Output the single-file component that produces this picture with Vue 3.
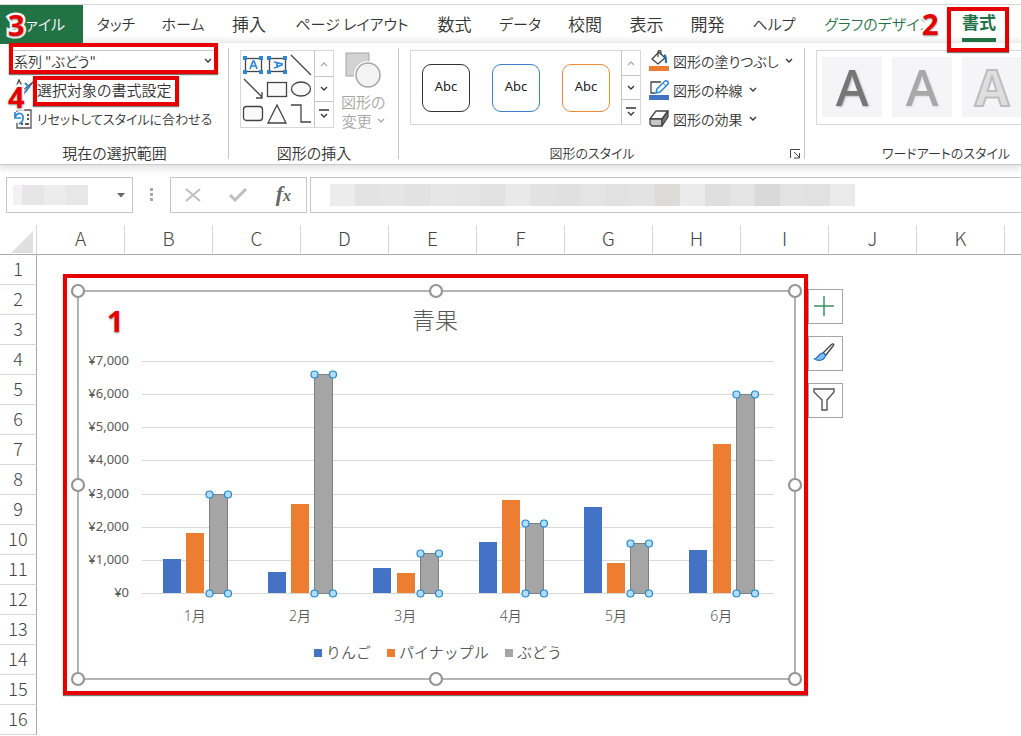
<script setup>
const tabs = [
  { name: 'タッチ', kana: true },
  { name: 'ホーム', kana: true },
  { name: '挿入' },
  { name: 'ページ レイアウト', kana: true },
  { name: '数式' },
  { name: 'データ', kana: true },
  { name: '校閲' },
  { name: '表示' },
  { name: '開発' },
  { name: 'ヘルプ', kana: true }
]
const presets = ['dark', 'blue', 'orange']
const wordArts = ['solid', 'soft', 'outline']
const columns = ['A', 'B', 'C', 'D', 'E', 'F', 'G', 'H', 'I', 'J', 'K', '']
const rowCount = 16

const plot = { left: 72, top: 78, width: 632, height: 232, max: 7000 }
const months = ['1月', '2月', '3月', '4月', '5月', '6月']
const series = [
  { name: 'りんご', color: '#4472c4', values: [1030, 630, 750, 1540, 2600, 1300], legendX: 244 },
  { name: 'パイナップル', color: '#ed7d31', values: [1800, 2700, 600, 2800, 900, 4500], legendX: 317 },
  { name: 'ぶどう', color: '#a5a5a5', values: [3000, 6600, 1200, 2100, 1500, 6000], legendX: 435 }
]
const ticks = [7000, 6000, 5000, 4000, 3000, 2000, 1000, 0]
const bottom = plot.top + plot.height
const step = plot.width / months.length
const yOf = (v) => Math.round(bottom - (v / plot.max) * plot.height)
const xOf = (m, s) => Math.floor(plot.left + m * step + 21.05 + s * 23.3)
const yen = (v) => '¥' + v.toLocaleString('en-US')
const selected = series[2].values.map((v, m) => ({ x: xOf(m, 2), y: yOf(v) }))
const frameHandles = [[8, 8], [366, 8], [725, 8], [8, 202], [725, 202], [8, 396], [366, 396], [725, 396]]

const mosaic = ['#ececec', '#e3e3e3', '#e5e5e5', '#e2e2e2', '#e6e6e6', '#e4e4e4', '#e1e1e1', '#e9e9e9', '#e2e2e2', '#e0e0e0', '#e4e4e4', '#e1e1e1', '#e3e3e3', '#dddbd8', '#ebebeb', '#dfdfdf', '#e4e4e4', '#d9d9d9', '#e3e3e3', '#e1e1e1', '#eaeaea']
</script>

<template>
  <div class="app">
    <nav class="tabs">
      <button class="tab file">ファイル</button>
      <button v-for="t in tabs" :key="t.name" class="tab" :class="{ kana: t.kana }">{{ t.name }}</button>
      <button class="tab kana design">グラフのデザイン</button>
      <button class="tab current"><span>書式</span></button>
    </nav>

    <section class="ribbon">
      <div class="group selection">
        <div class="body stack">
          <label class="combo">
            <select aria-label="グラフ要素">
              <option>系列 "ぶどう"</option>
            </select>
            <svg class="chev" width="8" height="6" viewBox="0 0 8 6"><path d="M1 1l3 3 3-3" /></svg>
          </label>
          <button class="cmd large">
            <svg width="24" height="22" viewBox="0 0 24 22" fill="none"><path d="M3 13L8 1l4 8" stroke="#555" stroke-width="1.5" /><path d="M22 3l-9 11-3 2 1-4z" stroke="#555" stroke-width="1.3" /><path d="M14 4l4 4-7 9" stroke="#2b88d8" stroke-width="2" /></svg>
            選択対象の書式設定
          </button>
          <button class="cmd small">
            <svg width="24" height="22" viewBox="0 0 24 22" fill="none"><path d="M6 4V2h14v18H6v-5" fill="#fafafa" stroke="#555" stroke-width="1.3" /><path d="M10 16h2m2 0h4M16 11h2M16 7h2" stroke="#555" stroke-width="2" /><path d="M4 4v6h6M4 10c2-7 9-5 8 0 0 3-2 5-4 6" stroke="#2b88d8" stroke-width="1.7" /></svg>
            リセットしてスタイルに合わせる
          </button>
        </div>
        <h2>現在の選択範囲</h2>
      </div>

      <div class="group insert">
        <div class="body">
          <div class="gallery">
            <svg width="73" height="75" viewBox="0 0 73 75" fill="none" stroke="#444" stroke-width="1.3">
              <g><rect x="4.500" y="7.500" width="16" height="13" /><path d="M9 18l3-8h1l3 8M10 15h5" stroke="#2b88d8" stroke-width="1.700" /></g>
              <g><rect x="28.500" y="7.500" width="16" height="13" /><path d="M33 11l8 2v1l-8 3M36 11v6" stroke="#2b88d8" stroke-width="1.700" /></g>
              <g fill="#2b88d8" stroke="none"><path d="M2 5h4v4H2zM18 5h4v4h-4zM2 19h4v4H2zM18 19h4v4h-4zM26 5h4v4h-4zM42 5h4v4h-4zM26 19h4v4h-4zM42 19h4v4h-4z" /></g>
              <path d="M50 4l20 20M3 28l18 18M21 41v6h-6" />
              <rect x="26.500" y="31.500" width="19" height="14" fill="#fafafa" />
              <ellipse cx="60" cy="38" rx="9.500" ry="7" fill="#fafafa" />
              <rect x="2.500" y="55.500" width="19" height="14" rx="3" fill="#fafafa" />
              <path d="M36 54l9 18H27z" fill="#fafafa" />
              <path d="M50 54h10v17h10" />
            </svg>
            <div class="scroll">
              <button aria-label="上へ" class="off"><svg class="chev" width="8" height="6" viewBox="0 0 8 6"><path d="M1 5l3-3 3 3" /></svg></button>
              <button aria-label="下へ"><svg class="chev" width="8" height="6" viewBox="0 0 8 6"><path d="M1 1l3 3 3-3" /></svg></button>
              <button aria-label="その他"><svg class="chev" width="10" height="10" viewBox="0 0 10 10"><path d="M0 1h10M2 5l3 3 3-3" /></svg></button>
            </div>
          </div>
          <button class="change" disabled>
            <svg width="38" height="40" viewBox="0 0 38 40"><rect x="2" y="3" width="23" height="23" fill="#d2d2d2" stroke="#a6a6a6" /><circle cx="24" cy="25" r="14" fill="#fff" /><circle cx="24" cy="25" r="12" fill="#f3f3f3" stroke="#a6a6a6" stroke-width="1.500" /></svg>
            <span>図形の</span>
            <span>変更 <svg class="chev" width="8" height="6" viewBox="0 0 8 6"><path d="M1 1l3 3 3-3" /></svg></span>
          </button>
        </div>
        <h2>図形の挿入</h2>
      </div>

      <div class="group styles">
        <div class="body">
          <div class="gallery wide">
            <div class="cards">
              <button v-for="p in presets" :key="p" class="card" :class="p">Abc</button>
            </div>
            <div class="scroll">
              <button aria-label="上へ" class="off"><svg class="chev" width="8" height="6" viewBox="0 0 8 6"><path d="M1 5l3-3 3 3" /></svg></button>
              <button aria-label="下へ"><svg class="chev" width="8" height="6" viewBox="0 0 8 6"><path d="M1 1l3 3 3-3" /></svg></button>
              <button aria-label="その他"><svg class="chev" width="10" height="10" viewBox="0 0 10 10"><path d="M0 1h10M2 5l3 3 3-3" /></svg></button>
            </div>
          </div>
          <div class="stack">
            <button class="cmd">
              <svg width="20" height="22" viewBox="0 0 20 22" fill="none"><rect y="16" width="20" height="5" fill="#ed7d31" /><path d="M3 9l7-7 6 6-7 6z" fill="#fafafa" stroke="#444" stroke-width="1.300" /><path d="M9 7V2c0-2 3-2 3 0v3" stroke="#444" stroke-width="1.200" /><path d="M15 5c2 1 2 3 2 8" stroke="#1e6fc0" stroke-width="2" /></svg>
              図形の塗りつぶし
              <svg class="chev" width="8" height="6" viewBox="0 0 8 6"><path d="M1 1l3 3 3-3" /></svg>
            </button>
            <button class="cmd">
              <svg width="20" height="22" viewBox="0 0 20 22" fill="none"><rect y="16" width="20" height="5" fill="#4472c4" /><path d="M12 3H2v11h4" stroke="#444" stroke-width="1.300" /><path d="M7 14l1-4 8-8c2-1 4 1 3 3l-8 8z" fill="#fff" stroke="#2b88d8" stroke-width="1.500" /><path d="M14 4l3 3" stroke="#2b88d8" /></svg>
              図形の枠線
              <svg class="chev" width="8" height="6" viewBox="0 0 8 6"><path d="M1 1l3 3 3-3" /></svg>
            </button>
            <button class="cmd">
              <svg width="20" height="22" viewBox="0 0 20 22" stroke="#444" stroke-width="1.300" stroke-linejoin="round"><path d="M1 11L7 3h12l-6 8z" fill="#fff" /><path d="M1 11h12v7H3l-2-2z" fill="#c8c8c8" /><path d="M13 11l6-8v6l-6 9z" fill="#777" /></svg>
              図形の効果
              <svg class="chev" width="8" height="6" viewBox="0 0 8 6"><path d="M1 1l3 3 3-3" /></svg>
            </button>
          </div>
        </div>
        <h2 class="kana">図形のスタイル</h2>
        <button class="launcher" aria-label="図形の書式設定"><svg width="11" height="10" viewBox="0 0 11 10" fill="none" stroke="#444"><path d="M.5 9V.5H10M4 3l5 5M9.500 4v5H4" /></svg></button>
      </div>

      <div class="group wordart">
        <div class="body">
          <div class="tiles">
            <button v-for="w in wordArts" :key="w" :class="w">A</button>
          </div>
        </div>
        <h2 class="kana">ワードアートのスタイル</h2>
      </div>
    </section>

    <section class="formula">
      <div class="namebox">
        <i class="blur"></i>
        <svg width="8" height="5" viewBox="0 0 8 5"><path d="M0 0h8L4 4.500z" fill="#666" /></svg>
      </div>
      <svg class="dots" width="4" height="14" viewBox="0 0 4 14"><path d="M0 0h3v3H0zM0 5h3v3H0zM0 10h3v3H0z" fill="#aaa" /></svg>
      <div class="actions">
        <button aria-label="キャンセル"><svg width="16" height="14" viewBox="0 0 16 14"><path d="M1 1l14 12M15 1L1 13" stroke="#bfbfbf" stroke-width="2" /></svg></button>
        <button aria-label="入力"><svg width="18" height="14" viewBox="0 0 18 14"><path d="M1 7l5 5L17 1" fill="none" stroke="#bfbfbf" stroke-width="3" /></svg></button>
        <button aria-label="関数の挿入" class="fx">f<small>x</small></button>
      </div>
      <div class="bar"><i v-for="(c, i) in mosaic" :key="i" :style="{ background: c }"></i></div>
    </section>

    <main class="sheet">
      <table>
        <thead>
          <tr>
            <th class="corner"><svg width="22" height="22" viewBox="0 0 22 22"><path d="M22 0v22H0z" fill="#dfdfdf" /></svg></th>
            <th v-for="(c, i) in columns" :key="i">{{ c }}</th>
          </tr>
        </thead>
        <tbody>
          <tr v-for="r in rowCount" :key="r">
            <th>{{ r }}</th>
            <td colspan="12"></td>
          </tr>
        </tbody>
      </table>

      <svg class="chart" width="733" height="404" viewBox="0 0 733 404">
        <rect x="8" y="8" width="717" height="388" fill="#fff" stroke="#a0a0a0" stroke-width="1.600" />
        <text class="title" x="365" y="46">青果</text>
        <g v-for="t in ticks" :key="t">
          <line :x1="plot.left" :x2="plot.left + plot.width" :y1="yOf(t) + 0.5" :y2="yOf(t) + 0.5" stroke="#d9d9d9" />
          <text class="tick" x="59" :y="yOf(t) + 4">{{ yen(t) }}</text>
        </g>
        <g v-for="(s, si) in series" :key="s.name" :fill="s.color">
          <rect v-for="(v, m) in s.values" :key="m" :x="xOf(m, si)" :y="yOf(v)" width="18" :height="bottom - yOf(v)" />
          <rect :x="s.legendX" y="366" width="8" height="8" />
          <text class="legend" :x="s.legendX + 12" y="375">{{ s.name }}</text>
        </g>
        <text v-for="(m, i) in months" :key="m" class="month" :x="plot.left + (i + 0.5) * step" y="338">{{ m }}</text>
        <g v-for="b in selected" :key="b.x">
          <rect :x="b.x + 0.5" :y="b.y + 0.5" width="18" :height="bottom - b.y" fill="none" stroke="#7f7f7f" />
          <g fill="#b4dcf8" stroke="#1e8ad6" stroke-width="1.2">
            <circle :cx="b.x + 0.5" :cy="b.y + 0.5" r="3.5" /><circle :cx="b.x + 19" :cy="b.y + 0.5" r="3.5" />
            <circle :cx="b.x + 0.5" :cy="bottom + 0.5" r="3.5" /><circle :cx="b.x + 19" :cy="bottom + 0.5" r="3.5" />
          </g>
        </g>
        <circle v-for="(h, i) in frameHandles" :key="'h' + i" :cx="h[0]" :cy="h[1]" r="6" fill="#fff" stroke="#959595" stroke-width="2.200" />
      </svg>

      <div class="tools">
        <button aria-label="グラフ要素"><svg width="22" height="22" viewBox="0 0 22 22"><path d="M11 1v20M1 11h20" stroke="#3a9160" stroke-width="1.500" /></svg></button>
        <button aria-label="グラフ スタイル"><svg width="22" height="22" viewBox="0 0 22 22" fill="none"><path d="M10 11l8-8c2-2 4-1 2 1l-7 9z" fill="#fff" stroke="#444" stroke-width="1.300" /><path d="M1 17c4 0 4-5 8-6 3 0 4 2 3 4-2 4-7 4-11 2z" fill="#83bdec" stroke="#1e6fc0" stroke-width="1.200" /></svg></button>
        <button aria-label="グラフ フィルター"><svg width="22" height="24" viewBox="0 0 22 24"><path d="M1 1h20v3l-7 8v10H9V12L1 4z" fill="#fafafa" stroke="#555" stroke-width="1.400" /></svg></button>
      </div>
    </main>

    <div class="mark m-chart"></div>
    <div class="mark m-combo"></div>
    <div class="mark m-format"></div>
    <div class="mark m-tab"></div>
    <b class="num n1">1</b>
    <b class="num n2">2</b>
    <b class="num n3">3</b>
    <b class="num n4">4</b>
  </div>
</template>

<style>
body { background: #fff; overflow: hidden; }
</style>

<style scoped>
* { box-sizing: border-box; }
.app {
  position: relative;
  overflow: hidden;
  padding-top: 4px;
  color: #333;
  font-family: "Noto Sans CJK JP", sans-serif;
  font-size: 15px;
  font-weight: 350;
  font-feature-settings: "palt";
}
button { margin: 0; padding: 0; border: 0; background: none; color: inherit; font: inherit; font-feature-settings: inherit; white-space: nowrap; }
svg { flex: none; display: block; }
.chev { fill: none; stroke: currentColor; stroke-width: 1.3; }

.tabs {
  display: grid;
  grid-template-columns: 83fr 66fr 68fr 64fr 142fr 63fr 68fr 62fr 61fr 61fr 72fr 137fr 64fr 10fr;
  height: 39px;
  border-top: 1px solid #d8d8d8;
}
.tab { min-width: 0; font-size: 17px; line-height: 34px; padding-bottom: 2px; }
.tab.kana { font-size: 15px; }
.tab.file { background: #217346; color: #fff; text-align: right; padding-right: 18px; font-size: 15px; }
.design { color: #217346; }
.current { color: #217346; font-weight: 700; }
.current span { display: inline-block; line-height: 32px; border-bottom: 4px solid #217346; }

.ribbon { display: flex; height: 122px; border-bottom: 1px solid #c8c8c8; box-shadow: 0 1px 8px 2px #ddd; }
.group { position: relative; display: flex; flex-direction: column; flex: none; padding-top: 4px; }
.group::after { content: ""; position: absolute; right: 0; top: 5px; bottom: 5px; border-right: 1px solid #c6c6c6; }
.selection { width: 229px; }
.insert { width: 170px; }
.styles { width: 406px; }
.wordart { width: 282px; }
.body { display: flex; flex: 1; padding: 3px 0 0 11px; }
.group h2 { margin: 0; height: 22px; font-size: 15px; line-height: 22px; font-weight: inherit; text-align: center; }
.group h2.kana { font-size: 13px; }
.styles h2 { padding-right: 20px; }
.stack { display: flex; flex-direction: column; gap: 5px; }
.stack .cmd { display: flex; align-items: center; gap: 4px; height: 24px; padding-bottom: 2px; line-height: 22px; font-size: 14px; }
.stack .cmd .chev { margin-left: 2px; }
.selection .cmd { gap: 2px; }
.stack .cmd.large { font-size: 15px; }
.stack .cmd.small { font-size: 13px; }
.combo { display: flex; align-items: center; width: 204px; height: 24px; border: 1px solid #c6c6c6; padding: 0 2px 2px 0; }
.combo select { flex: 1; height: 20px; padding: 0 2px; border: 0; background: none; appearance: none; color: inherit; font: inherit; font-size: 14px; line-height: 20px; font-feature-settings: inherit; }
.styles .stack { padding-left: 8px; }

.gallery { display: flex; flex: none; height: 78px; border: 1px solid #d8d8d8; width: 94px; }
.gallery.wide { width: 231px; height: 75px; }
.scroll { display: grid; grid-template-rows: 25fr 24fr 26fr; flex: none; width: 19px; border-left: 1px solid #c6c6c6; }
.scroll button { display: grid; place-items: center; border-top: 1px solid #c6c6c6; }
.scroll .off { border-top: 0; color: #aaa; }
.change { display: flex; flex-direction: column; align-items: center; margin-left: 7px; color: #a6a6a6; line-height: 19px; }
.change svg { margin-bottom: 2px; }
.change .chev { margin: 0; }
.change span { display: flex; align-items: center; gap: 5px; }
.cards { display: flex; flex: 1; justify-content: center; align-items: center; padding: 0 4px; gap: 22px; }
.card { width: 48px; height: 48px; border: 1px solid; border-radius: 9px; color: #222; font-family: "Noto Sans", sans-serif; font-size: 13px; font-weight: 400; line-height: 42px; padding-bottom: 4px; }
.card.dark { border-color: #333; }
.card.blue { border-color: #3f7fd0; }
.card.orange { border-color: #ed8a3c; }
.launcher { position: absolute; right: 4px; bottom: 5px; }
.tiles { display: flex; flex: none; gap: 10px; height: 75px; padding: 6px 5px; border: 1px solid #d8d8d8; }
.tiles button { width: 60px; height: 60px; background: #f5f4f7; font-family: "Noto Sans", sans-serif; font-size: 50px; line-height: 60px; font-weight: 500; }
.tiles .solid { color: #767676; text-shadow: 1px 1px 2px #bbb; }
.tiles .soft { color: #a8a8a8; text-shadow: 1px 1px 2px #ddd; }
.tiles .outline { color: #dedede; font-weight: 700; -webkit-text-stroke: 2px #bdbdbd; }

.formula { display: flex; align-items: center; height: 60px; padding: 12px 0 12px 6px; }
.namebox, .actions, .bar { height: 36px; border: 1px solid #c6c6c6; background: #fff; }
.namebox { display: flex; align-items: center; justify-content: space-between; width: 127px; padding: 0 7px 0 6px; }
.blur { width: 75px; height: 20px; background: linear-gradient(90deg, #f3f1f3 9px, #e6e6e6 9px 31px, #ececec 31px 53px, #e7e7e7 53px); }
.dots { margin: 0 16px 0 17px; }
.actions { display: flex; align-items: center; justify-content: space-between; width: 137px; padding: 0 15px 0 14px; }
.fx { font-family: "Liberation Serif", serif; font-size: 22px; font-style: italic; font-weight: 700; line-height: 24px; color: #666; }
.fx small { font-size: 16px; }
.bar { display: flex; align-items: center; flex: 1; min-width: 0; margin-left: 3px; padding-left: 19px; border-right: 0; }
.bar i { flex: 0 1 25px; height: 22px; }

.sheet { position: relative; overflow: hidden; }
table { width: 1093px; table-layout: fixed; border-collapse: separate; border-spacing: 0; }
th { padding: 0; color: #444; font-weight: 300; border-right: 1px solid #d6d6d6; border-bottom: 1px solid #a8a8a8; }
thead th { height: 30px; padding-bottom: 3px; font-size: 19px; line-height: 26px; }
thead .corner { width: 37px; padding-bottom: 0; }
.corner svg { margin: 4px 0 0 11px; }
tbody th { height: 30px; padding-bottom: 3px; font-size: 18px; line-height: 26px; border-right-color: #a8a8a8; border-bottom-color: #d6d6d6; }
td { padding: 0; }

.chart { position: absolute; left: 70px; top: 58px; }
.chart text { fill: #595959; }
.title { font-size: 23px; font-weight: 300; text-anchor: middle; font-feature-settings: normal; }
.tick { font-family: "Noto Sans", sans-serif; font-size: 13px; font-weight: 400; text-anchor: end; }
.month { font-family: "Noto Sans", "Noto Sans CJK JP", sans-serif; font-size: 14px; text-anchor: middle; font-feature-settings: normal; }
.legend { font-size: 15px; font-feature-settings: normal; }
.tools { position: absolute; left: 808px; top: 64px; display: flex; flex-direction: column; gap: 12px; }
.tools button { display: grid; place-items: center; width: 35px; height: 35px; border: 1px solid #a5a5a5; background: #fff; padding: 0 3px 2px 0; }

.mark { position: absolute; border: 4px solid #e60000; box-shadow: 0 1px 1px #777; pointer-events: none; }
.m-chart { left: 63px; top: 274px; width: 745px; height: 421px; }
.m-combo { left: 9px; top: 43px; width: 209px; height: 31px; }
.m-format { left: 33px; top: 76px; width: 146px; height: 30px; }
.m-tab { left: 947px; top: 7px; width: 62px; height: 45px; }
.num { position: absolute; color: #e60000; font-family: "Noto Sans", sans-serif; font-size: 29px; line-height: 30px; font-weight: 700; -webkit-text-stroke: 5px #fff; paint-order: stroke fill; text-shadow: 0 1px 2px #888; }
.n1 { left: 107px; top: 306px; }
.n2 { left: 922px; top: 9px; }
.n3 { left: 8px; top: 10px; }
.n4 { left: 8px; top: 82px; }
</style>
